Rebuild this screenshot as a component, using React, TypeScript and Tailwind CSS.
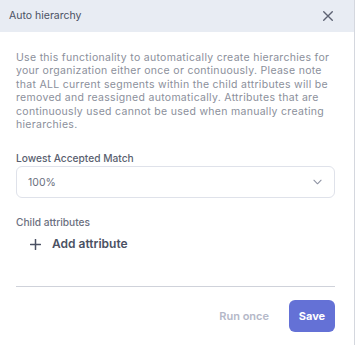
import React from "react";

const lines = [
  "Use this functionality to automatically create hierarchies for",
  "your organization either once or continuously. Please note",
  "that ALL current segments within the child attributes will be",
  "removed and reassigned automatically. Attributes that are",
  "continuously used cannot be used when manually creating",
  "hierarchies.",
];

export default function App() {
  return (
    <div className="w-[357px] h-[345px] bg-white flex" style={{ fontFamily: "Inter, 'Open Sans', sans-serif" }}>
      <div className="w-[355px] h-full flex flex-col border-r border-[#d4d7de]">
        <div className="h-[32px] bg-[#e8ecf3] flex items-center justify-between pl-[9px] pr-[20px] shrink-0">
          <span className="text-[10.5px] text-[#4b5163]">Auto hierarchy</span>
          <svg width="12" height="12" viewBox="0 0 14 14" fill="none" stroke="#5d6272" strokeWidth="1.6" strokeLinecap="round">
            <path d="M2 2L12 12M12 2L2 12" />
          </svg>
        </div>
        <div className="px-[16px] pt-[19px] flex flex-col">
          <p className="text-[10.5px] leading-[13.4px] text-[#8b8f9b] tracking-[0.3px] whitespace-nowrap">
            {lines.map((l, i) => (
              <React.Fragment key={i}>
                {l}
                {i < lines.length - 1 && <br />}
              </React.Fragment>
            ))}
          </p>
          <div className="mt-[20px] text-[10.2px] leading-[14px] font-medium text-[#5a5f70]">Lowest Accepted Match</div>
          <div className="mt-[1px] h-[32px] w-[319px] border border-[#dfe2ea] rounded-[6px] flex items-center justify-between pl-[11px] pr-[12px]">
            <span className="text-[10.5px] text-[#6b7080]">100%</span>
            <svg width="9" height="6" viewBox="0 0 10 6" fill="none" stroke="#8e93a3" strokeWidth="1.2" strokeLinecap="round" strokeLinejoin="round">
              <path d="M1 1L5 5L9 1" />
            </svg>
          </div>
          <div className="mt-[17px] text-[10.2px] leading-[14px] font-medium text-[#6b7080]">Child attributes</div>
          <div className="mt-[6px] h-[18px] flex items-center pl-[14px] gap-[11px]">
            <svg width="11" height="11" viewBox="0 0 11 11" fill="none" stroke="#4b5163" strokeWidth="1.5" strokeLinecap="round">
              <path d="M5.5 0.5V10.5M0.5 5.5H10.5" />
            </svg>
            <span className="text-[12px] font-semibold text-[#4b5163]">Add attribute</span>
          </div>
          <div className="mt-[33px] w-[319px] border-t border-[#cfd2da]" />
          <div className="mt-[13px] w-[319px] flex items-center justify-end">
            <span className="text-[11px] font-semibold text-[#b4b8c8] mr-[20px]">Run once</span>
            <button className="w-[46px] h-[32px] rounded-[6px] bg-[#6471d6] text-white text-[11px] font-bold">Save</button>
          </div>
        </div>
      </div>
    </div>
  );
}
